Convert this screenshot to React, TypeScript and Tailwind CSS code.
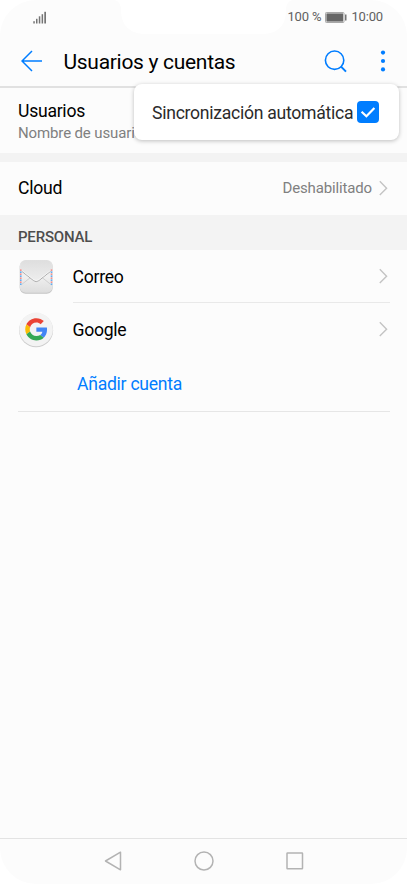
import React from 'react';

const Notch: React.FC = () => (
  <svg className="absolute top-0 left-[113px]" width="182" height="35" viewBox="0 0 182 35" fill="#ffffff">
    <path d="M0 0C5 0 8 4 8 10C8 25 17 34 32 34H149C165 34 173 25 173 10C173 4 176 0 181 0Z" />
  </svg>
);

const StatusBar: React.FC = () => (
  <div className="relative h-[34px] flex items-center justify-between pl-[33px] pr-[24px] text-[#616161]">
    <Notch />
    <svg width="14" height="13" viewBox="0 0 14 13" fill="#757575">
      <rect x="0.3" y="10.2" width="1.5" height="2.3" />
      <rect x="3" y="7.8" width="1.5" height="4.7" />
      <rect x="5.8" y="5.3" width="1.5" height="7.2" />
      <rect x="8.6" y="3.2" width="1.5" height="9.3" />
      <rect x="11.3" y="0.8" width="1.7" height="11.7" />
    </svg>
    <div className="relative flex items-center text-[13px] leading-4 tracking-[-0.15px]">
      <span>100 %</span>
      <svg className="ml-[4px] mr-[4px]" width="22" height="11" viewBox="0 0 22 11">
        <rect x="0.5" y="0.5" width="18.5" height="10" rx="0.8" fill="#ffffff" stroke="#a8a8a8" />
        <rect x="1.4" y="1.4" width="16.7" height="8.2" fill="#666666" />
        <rect x="20" y="2.5" width="1.5" height="6" fill="#757575" />
      </svg>
      <span>10:00</span>
    </div>
  </div>
);

const SyncMenu: React.FC = () => (
  <div className="absolute top-[84px] left-[134px] w-[265px] h-[56px] z-10 flex items-center pl-[18px] bg-white rounded-lg shadow-[0_1px_4px_rgba(0,0,0,0.25)]">
    <span className="w-[204.5px] text-[17.6px] leading-6 tracking-[-0.27px] text-[#2b2b2b] whitespace-nowrap pt-px">Sincronización automática</span>
    <span className="w-[22px] h-[22px] bg-[#007dff] rounded-[4px] flex items-center justify-center">
      <svg width="22" height="22" viewBox="0 0 22 22" fill="none" stroke="#ffffff" strokeWidth="2.2">
        <path d="M4.6 10.8L9.4 15.3L17.4 7" />
      </svg>
    </span>
  </div>
);

const Header: React.FC = () => (
  <header className="h-[54px] flex items-center pt-[2px] pl-[20.5px] pr-[20px] border-b-2 border-[#e1e1e1]">
    <svg width="22" height="22" viewBox="0 0 22 22" fill="none" stroke="#007dff" strokeWidth="1.5">
      <path d="M21 11H1M11 1L1 11L11 21" />
    </svg>
    <h1 className="ml-[21px] flex-1 text-[21px] leading-7 tracking-[-0.3px] text-black whitespace-nowrap pt-px">Usuarios y cuentas</h1>
    <svg width="23" height="23" viewBox="0 0 23 23" fill="none" stroke="#007dff" strokeWidth="1.6">
      <circle cx="10.6" cy="10.2" r="9.2" />
      <path d="M16.8 16.4L22 21.6" strokeWidth="2" />
    </svg>
    <svg className="ml-[32px]" width="8" height="22" viewBox="0 0 8 22" fill="#007dff">
      <circle cx="4" cy="2.6" r="2.1" />
      <circle cx="4" cy="11" r="2.1" />
      <circle cx="4" cy="19.4" r="2.1" />
    </svg>
  </header>
);

const Chevron: React.FC = () => (
  <svg width="9" height="16" viewBox="0 0 9 16" fill="none" stroke="#c4c4c4" strokeWidth="1.4">
    <path d="M0.8 1.3L7.6 8.2L0.8 15.1" />
  </svg>
);

const MailIcon: React.FC = () => (
  <svg width="36" height="36" viewBox="0 0 36 36">
    <defs>
      <linearGradient id="mailBody" x1="0" y1="0" x2="0" y2="1">
        <stop offset="0" stopColor="#e0e0e0" />
        <stop offset="0.5" stopColor="#f0f0f0" />
        <stop offset="1" stopColor="#dddddd" />
      </linearGradient>
      <linearGradient id="mailFlap" x1="0" y1="0" x2="0" y2="1">
        <stop offset="0" stopColor="#dedede" />
        <stop offset="1" stopColor="#eeeeee" />
      </linearGradient>
    </defs>
    <rect x="1.7" y="1.7" width="33" height="33" rx="6" fill="#c4c4c4" />
    <rect x="1.7" y="1" width="33" height="32.7" rx="6" fill="url(#mailBody)" />
    <path d="M3 26L12.5 18.5M33.5 26L24 18.5" stroke="#d0d0d0" fill="none" />
    <path d="M2.5 10.5L15.6 21Q18.2 23 20.8 21L34 10.5V7Q33 1.5 28 1.5H8Q3.5 1.5 2.5 7Z" fill="url(#mailFlap)" />
    <path d="M3.5 12L15.6 21.6Q18.2 23.6 20.8 21.6L32.9 12" stroke="#a6a6a6" fill="none" strokeWidth="1" />
    <path d="M3.5 11.2L15.6 20.7Q18.2 22.7 20.8 20.7L32.9 11.2" stroke="#fafafa" fill="none" strokeWidth="0.7" />
    <path d="M2.8 10.5V26M33.5 10.5V26" stroke="#f8f8f8" strokeWidth="1.8" />
    <path d="M2.8 10.5V26M33.5 10.5V26" stroke="#f26b66" strokeWidth="1.6" strokeDasharray="1.3 2.7" />
    <path d="M2.8 12.5V26M33.5 12.5V26" stroke="#2f95ea" strokeWidth="1.6" strokeDasharray="1.3 2.7" />
  </svg>
);

const GoogleIcon: React.FC = () => (
  <svg width="36" height="36" viewBox="0 0 36 36">
    <circle cx="18.1" cy="18.2" r="17" fill="#cccccc" />
    <circle cx="18.1" cy="17.4" r="16.8" fill="#f3f3f3" />
    <g transform="translate(7.2 6.2) scale(0.465)">
      <path fill="#ea4335" d="M24 9.5c3.54 0 6.71 1.22 9.21 3.6l6.85-6.85C35.9 2.38 30.47 0 24 0 14.62 0 6.51 5.38 2.56 13.22l7.98 6.19C12.43 13.72 17.74 9.5 24 9.5z" />
      <path fill="#4285f4" d="M46.98 24.55c0-1.57-.15-3.09-.38-4.55H24v9.02h12.94c-.58 2.96-2.26 5.48-4.78 7.18l7.73 6c4.51-4.18 7.09-10.36 7.09-17.65z" />
      <path fill="#fbbc05" d="M10.53 28.59c-.48-1.45-.76-2.99-.76-4.59s.27-3.14.76-4.59l-7.98-6.19C.92 16.46 0 20.12 0 24c0 3.88.92 7.54 2.56 10.78l7.97-6.19z" />
      <path fill="#34a853" d="M24 48c6.48 0 11.93-2.13 15.89-5.81l-7.73-6c-2.15 1.45-4.92 2.3-8.16 2.3-6.26 0-11.57-4.22-13.47-9.91l-7.98 6.19C6.51 42.62 14.62 48 24 48z" />
    </g>
  </svg>
);

const AccountRow: React.FC<{ icon: React.ReactNode; label: string; divider?: boolean }> = ({ icon, label, divider }) => (
  <div className="h-[53px] flex pl-[18px] pr-[17px]">
    <div className="w-[54.5px] pt-[9px]">{icon}</div>
    <div className={`flex-1 flex items-center justify-between pr-[2px] border-b ${divider ? 'border-[#e9e9e9]' : 'border-transparent'}`}>
      <span className="text-[17.6px] leading-6 tracking-[-0.27px] pt-px">{label}</span>
      <Chevron />
    </div>
  </div>
);

const NavBar: React.FC = () => (
  <nav className="h-[46px] flex items-center justify-center gap-[72px] pb-px border-t border-[#e3e3e3] text-[#b3b3b3]">
    <svg width="18" height="20" viewBox="0 0 18 20" fill="none" stroke="currentColor" strokeWidth="1.5" strokeLinejoin="round">
      <path d="M1.5 10L16.5 1.2V18.8Z" />
    </svg>
    <svg width="20" height="20" viewBox="0 0 20 20" fill="none" stroke="currentColor" strokeWidth="1.5">
      <circle cx="10" cy="10" r="9" />
    </svg>
    <svg width="18" height="18" viewBox="0 0 18 18" fill="none" stroke="currentColor" strokeWidth="1.5">
      <rect x="1" y="1" width="15.5" height="15.7" rx="0.5" />
    </svg>
  </nav>
);

const App: React.FC = () => {
  return (
    <div className="w-[408px] h-[884px] bg-white font-[Roboto,sans-serif] text-black">
      <div className="relative w-[407px] h-[884px] flex flex-col bg-[#fcfcfc] rounded-[36px] overflow-hidden">
        <StatusBar />
        <Header />
        <SyncMenu />
        <main className="flex-1">
          <div className="h-[65px] pl-[18px] pt-[11px]">
            <p className="text-[17.6px] leading-6 tracking-[-0.27px]">Usuarios</p>
            <p className="text-[15px] leading-5 tracking-[-0.13px] text-[#808080]">Nombre de usuario</p>
          </div>
          <div className="h-[9px] bg-[#f3f3f3]" />
          <div className="h-[53px] flex items-center justify-between pl-[18px] pr-[19px] pb-px">
            <span className="text-[17.6px] leading-6 tracking-[-0.27px]">Cloud</span>
            <div className="flex items-center gap-[7px]">
              <span className="text-[15px] leading-5 tracking-[-0.15px] text-[#808080]">Deshabilitado</span>
              <Chevron />
            </div>
          </div>
          <h2 className="h-[35px] pl-[18px] pt-[12px] bg-[#f3f3f3] text-[15px] leading-5 font-medium tracking-[-0.2px] text-[#4d4d4d]">PERSONAL</h2>
          <AccountRow icon={<MailIcon />} label="Correo" divider />
          <AccountRow icon={<GoogleIcon />} label="Google" />
          <div className="h-[56px] ml-[18px] mr-[17px] pl-[59px] pt-[16px] border-b border-[#e6e6e6]">
            <button className="block text-[17.6px] leading-6 tracking-[-0.27px] text-[#007dff]">Añadir cuenta</button>
          </div>
        </main>
        <NavBar />
      </div>
    </div>
  );
};

export default App;
